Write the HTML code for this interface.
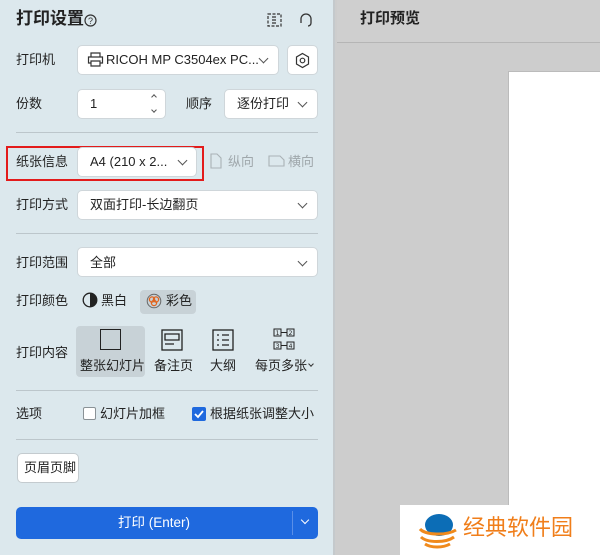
<!DOCTYPE html>
<html><head><meta charset="utf-8"><style>
*{box-sizing:border-box;margin:0;padding:0}
body{width:600px;height:555px;overflow:hidden;position:relative;font-family:"Liberation Sans","Noto Sans CJK SC",sans-serif;font-size:13px;color:#222;background:#cdcdcd}
#left{position:absolute;left:0;top:0;width:335px;height:555px;background:#dce8ed;border-right:2px solid #c4c9cc}
.a{position:absolute}
.lbl{position:absolute;left:16px;font-size:13px;line-height:16px}
.box{position:absolute;background:#fff;border:1px solid #cfd6da;border-radius:5px}
.chev{position:absolute;width:7px;height:7px;border-right:1.3px solid #555;border-bottom:1.3px solid #555;transform:rotate(45deg)}
.hr{position:absolute;left:16px;width:302px;height:1px;background:#bcc6cb}
.t{position:absolute;font-size:13px;line-height:16px;white-space:nowrap}
</style></head><body>
<div id="left">
<div class="t" style="left:16px;top:8px;font-size:17px;font-weight:bold;line-height:22px">打印设置</div>
<svg class="a" style="left:84px;top:14px" width="13" height="13" viewBox="0 0 13 13"><circle cx="6.5" cy="6.5" r="5.5" fill="none" stroke="#333" stroke-width="1.2"/><text x="6.5" y="10" font-size="9" text-anchor="middle" fill="#333" font-family="Liberation Sans">?</text></svg>
<svg class="a" style="left:267px;top:13px" width="15" height="14" viewBox="0 0 15 14"><rect x="1" y="1" width="13" height="12" fill="none" stroke="#333" stroke-width="1.2" stroke-dasharray="3 1.5"/><path d="M5 4h4M5 7h4M5 10h4" stroke="#333" stroke-width="1.2"/></svg>
<svg class="a" style="left:298px;top:12px" width="16" height="16" viewBox="0 0 16 16"><path d="M3 10V7a5 5 0 0110 0v3M3 8v3M13 8v3a3 3 0 01-3 3" fill="none" stroke="#333" stroke-width="1.3"/></svg>

<div class="lbl" style="top:52px">打印机</div>
<div class="box" style="left:77px;top:45px;width:202px;height:30px"></div>
<svg class="a" style="left:87px;top:52px" width="17" height="15" viewBox="0 0 17 15"><path d="M4 5V1h9v4M4 11H1.5V5h14v6H13M4 9h9v5H4z" fill="none" stroke="#333" stroke-width="1.2"/></svg>
<div class="t" style="left:106px;top:52px;font-size:13px">RICOH MP C3504ex PC...</div>
<div class="chev" style="left:260px;top:55px"></div>
<div class="box" style="left:287px;top:45px;width:31px;height:30px"></div>
<svg class="a" style="left:294px;top:52px" width="17" height="17" viewBox="0 0 17 17"><path d="M8.5 1.5l6 3.5v7l-6 3.5-6-3.5v-7z" fill="none" stroke="#333" stroke-width="1.2"/><circle cx="8.5" cy="8.5" r="2.3" fill="none" stroke="#333" stroke-width="1.2"/></svg>

<div class="lbl" style="top:96px">份数</div>
<div class="box" style="left:77px;top:89px;width:89px;height:30px"></div>
<div class="t" style="left:90px;top:96px">1</div>
<div class="a" style="left:152px;top:95px;width:4px;height:4px;border-left:1px solid #555;border-top:1px solid #555;transform:rotate(45deg)"></div>
<div class="a" style="left:152px;top:108px;width:4px;height:4px;border-right:1px solid #555;border-bottom:1px solid #555;transform:rotate(45deg)"></div>
<div class="t" style="left:186px;top:96px">顺序</div>
<div class="box" style="left:224px;top:89px;width:94px;height:30px"></div>
<div class="t" style="left:237px;top:96px">逐份打印</div>
<div class="chev" style="left:299px;top:99px"></div>
<div class="hr" style="top:132px"></div>

<div class="a" style="left:6px;top:146px;width:198px;height:35px;border:2px solid #e31b1b"></div>
<div class="lbl" style="top:154px">纸张信息</div>
<div class="box" style="left:77px;top:147px;width:120px;height:30px"></div>
<div class="t" style="left:90px;top:154px;font-size:13px">A4 (210 x 2...</div>
<div class="chev" style="left:179px;top:157px"></div>
<svg class="a" style="left:210px;top:153px" width="12" height="16" viewBox="0 0 12 16"><path d="M1 1h6l4 4v10H1z" fill="none" stroke="#aab2b6" stroke-width="1.1"/></svg>
<div class="t" style="left:228px;top:154px;color:#a0a8ac">纵向</div>
<svg class="a" style="left:268px;top:155px" width="17" height="12" viewBox="0 0 17 12"><path d="M1 1h11l4 4v6H1z" fill="none" stroke="#aab2b6" stroke-width="1.1"/></svg>
<div class="t" style="left:288px;top:154px;color:#a0a8ac">横向</div>

<div class="lbl" style="top:197px">打印方式</div>
<div class="box" style="left:77px;top:190px;width:241px;height:30px"></div>
<div class="t" style="left:90px;top:197px">双面打印-长边翻页</div>
<div class="chev" style="left:299px;top:200px"></div>
<div class="hr" style="top:233px"></div>

<div class="lbl" style="top:255px">打印范围</div>
<div class="box" style="left:77px;top:247px;width:241px;height:30px"></div>
<div class="t" style="left:90px;top:255px">全部</div>
<div class="chev" style="left:299px;top:258px"></div>

<div class="lbl" style="top:293px">打印颜色</div>
<svg class="a" style="left:82px;top:292px" width="16" height="16" viewBox="0 0 16 16"><circle cx="8" cy="8" r="6.8" fill="none" stroke="#222" stroke-width="1.3"/><path d="M8 1.2a6.8 6.8 0 010 13.6z" fill="#222"/></svg>
<div class="t" style="left:101px;top:293px">黑白</div>
<div class="a" style="left:140px;top:290px;width:56px;height:24px;background:#c8d2d7;border-radius:4px"></div>
<svg class="a" style="left:146px;top:293px" width="16" height="16" viewBox="0 0 16 16"><circle cx="8" cy="8" r="6.8" fill="none" stroke="#666" stroke-width="1"/><circle cx="6" cy="6.5" r="2.6" fill="none" stroke="#e0641e" stroke-width="1.3"/><circle cx="10" cy="6.5" r="2.6" fill="none" stroke="#e0641e" stroke-width="1.3"/><circle cx="8" cy="10" r="2.6" fill="none" stroke="#e0641e" stroke-width="1.3"/></svg>
<div class="t" style="left:166px;top:293px">彩色</div>

<div class="lbl" style="top:345px">打印内容</div>
<div class="a" style="left:76px;top:326px;width:69px;height:51px;background:#c8d2d7;border-radius:4px"></div>
<div class="a" style="left:100px;top:329px;width:21px;height:21px;border:1.3px solid #222"></div>
<div class="t" style="left:80px;top:358px">整张幻灯片</div>
<svg class="a" style="left:161px;top:329px" width="22" height="22" viewBox="0 0 22 22"><rect x="1" y="1" width="20" height="20" fill="none" stroke="#222" stroke-width="1.3"/><path d="M4 5h14v6H4zM4 15h9" fill="none" stroke="#222" stroke-width="1.3"/></svg>
<div class="t" style="left:154px;top:358px">备注页</div>
<svg class="a" style="left:212px;top:329px" width="22" height="22" viewBox="0 0 22 22"><rect x="1" y="1" width="20" height="20" fill="none" stroke="#222" stroke-width="1.3"/><path d="M5 6h2M5 11h2M5 16h2M10 6h7M10 11h7M10 16h7" stroke="#222" stroke-width="1.3"/></svg>
<div class="t" style="left:210px;top:358px">大纲</div>
<svg class="a" style="left:273px;top:328px" width="22" height="22" viewBox="0 0 22 22" font-family="DejaVu Sans" font-size="6" text-anchor="middle" fill="#222"><g fill="none" stroke="#222" stroke-width="1"><rect x="1" y="1" width="7" height="7"/><rect x="14" y="1" width="7" height="7"/><rect x="1" y="14" width="7" height="7"/><rect x="14" y="14" width="7" height="7"/><path d="M8 4.5h6M8 17.5h6"/></g><text x="4.5" y="7">1</text><text x="17.5" y="7">2</text><text x="4.5" y="20">3</text><text x="17.5" y="20">4</text></svg>
<div class="t" style="left:255px;top:358px">每页多张</div>
<div class="a" style="left:309px;top:362px;width:4px;height:4px;border-right:1.2px solid #333;border-bottom:1.2px solid #333;transform:rotate(45deg)"></div>
<div class="hr" style="top:390px"></div>

<div class="lbl" style="top:406px">选项</div>
<div class="a" style="left:83px;top:407px;width:13px;height:13px;border:1px solid #8a9296;border-radius:2px;background:#fff"></div>
<div class="t" style="left:100px;top:406px">幻灯片加框</div>
<div class="a" style="left:192px;top:407px;width:14px;height:14px;background:#1f69de;border-radius:2px"></div>
<svg class="a" style="left:192px;top:407px" width="14" height="14" viewBox="0 0 14 14"><path d="M3 7l3 3 5-6" fill="none" stroke="#fff" stroke-width="1.8"/></svg>
<div class="t" style="left:210px;top:406px">根据纸张调整大小</div>
<div class="hr" style="top:439px"></div>

<div class="box" style="left:17px;top:453px;width:62px;height:30px;border-color:#c4cbcf"></div>
<div class="t" style="left:24px;top:460px">页眉页脚</div>

<div class="a" style="left:16px;top:507px;width:302px;height:32px;background:#1f69de;border-radius:5px"></div>
<div class="t" style="left:16px;top:515px;width:276px;text-align:center;color:#fff;font-size:13.5px">打印 (Enter)</div>
<div class="a" style="left:292px;top:511px;width:1px;height:24px;background:#5a8fe8"></div>
<div class="a" style="left:302px;top:517px;width:6px;height:6px;border-right:1.3px solid #fff;border-bottom:1.3px solid #fff;transform:rotate(45deg)"></div>
</div>

<div class="a" style="left:337px;top:0;width:263px;height:43px;background:#cfcfcf;border-bottom:1px solid #b5b5b5"></div>
<div class="t" style="left:360px;top:9px;font-size:15px;line-height:20px;font-weight:bold;color:#222">打印预览</div>
<div class="a" style="left:508px;top:71px;width:92px;height:435px;background:#fff;border-left:1px solid #bbb;border-top:1px solid #bbb"></div>
<div class="a" style="left:400px;top:505px;width:200px;height:50px;background:#fff"></div>
<svg class="a" style="left:416px;top:509px" width="44" height="44" viewBox="0 0 44 44"><ellipse cx="23" cy="16" rx="14" ry="11" fill="#0c6db6"/><path d="M4 20c5 6 26 7 36 1M5 28c6 6 25 6 33 0M9 35c6 4 18 4 25 0" fill="none" stroke="#f08a1c" stroke-width="3"/></svg>
<div class="t" style="left:463px;top:514px;font-size:22px;line-height:28px;color:#f07e1a">经典软件园</div>
</body></html>
